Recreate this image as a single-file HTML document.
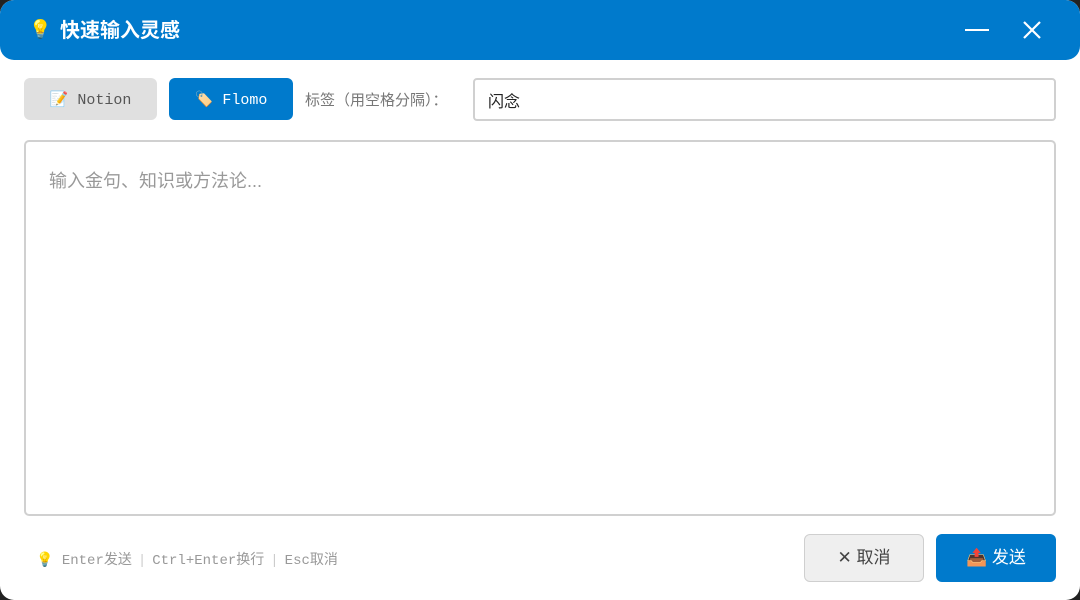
<!DOCTYPE html>
<html><head><meta charset="utf-8"><style>
*{margin:0;padding:0;box-sizing:border-box}
html,body{width:1080px;height:600px;background:#222;overflow:hidden}
.win{position:absolute;left:0;top:0;width:1080px;height:600px;background:#fff;border-radius:14px;overflow:hidden;font-family:"Liberation Sans","Noto Sans CJK SC",sans-serif}
.title{position:absolute;left:0;top:0;width:1080px;height:60px;background:#007acc;border-radius:14px 14px 14px 14px}
.title .t{position:absolute;left:60px;top:18px;color:#fff;font-size:20px;font-weight:bold;line-height:26px}
.title .ic{position:absolute;left:29px;top:19px;font-size:18px}
.min{position:absolute;left:965px;top:29px;width:24px;height:2px;background:#fff}
.cls{position:absolute;left:1020px;top:18px}
.btn{position:absolute;border-radius:6px;font-family:"Liberation Mono","Noto Sans CJK SC",monospace;font-size:15px;text-align:center}
.ta{position:absolute;left:24px;top:140px;width:1032px;height:376px;border:2px solid #d0d0d0;border-radius:5px}
.ph{position:absolute;left:49px;top:167px;font-size:18px;color:#999;font-family:"Liberation Sans","Noto Sans CJK SC",sans-serif}
.tag{position:absolute;left:473px;top:78px;width:583px;height:43px;border:2px solid #d0d0d0;border-radius:4px;font-size:16px;padding:8px 0 0 13px;color:#222}
.lbl{position:absolute;left:305px;top:89px;font-size:15px;color:#777;font-family:"Noto Sans CJK SC",sans-serif}
.hint{position:absolute;left:36px;top:549px;font-size:14px;color:#999;font-family:"Liberation Mono","Noto Sans CJK SC",monospace}
.sep{color:#ccc;margin:0 6px}
</style></head><body>
<div class="win">
<div class="title"><span class="ic">💡</span><span class="t">快速输入灵感</span><div class="min"></div>
<svg class="cls" width="24" height="24" viewBox="0 0 24 24"><path d="M4 4L20 20M20 4L4 20" stroke="#fff" stroke-width="2.2"/></svg></div>
<div class="btn" style="left:24px;top:78px;width:133px;height:42px;background:#e0e0e0;color:#555;line-height:45px">📝 Notion</div>
<div class="btn" style="left:169px;top:78px;width:124px;height:42px;background:#007acc;color:#fff;line-height:45px">🏷️ Flomo</div>
<div class="lbl">标签（用空格分隔）：</div>
<div class="tag">闪念</div>
<div class="ta"></div>
<div class="ph">输入金句、知识或方法论...</div>
<div class="hint">💡 Enter发送<span class="sep">|</span>Ctrl+Enter换行<span class="sep">|</span>Esc取消</div>
<div class="btn" style="left:804px;top:534px;width:120px;height:48px;background:#efefef;border:1px solid #cfcfcf;color:#444;line-height:46px;font-family:'Liberation Sans','Noto Sans CJK SC',sans-serif;font-size:17px">✕ 取消</div>
<div class="btn" style="left:936px;top:534px;width:120px;height:48px;background:#007acc;color:#fff;line-height:48px;font-family:'Liberation Sans','Noto Sans CJK SC',sans-serif;font-size:17px">📤 发送</div>
</div>
</body></html>
